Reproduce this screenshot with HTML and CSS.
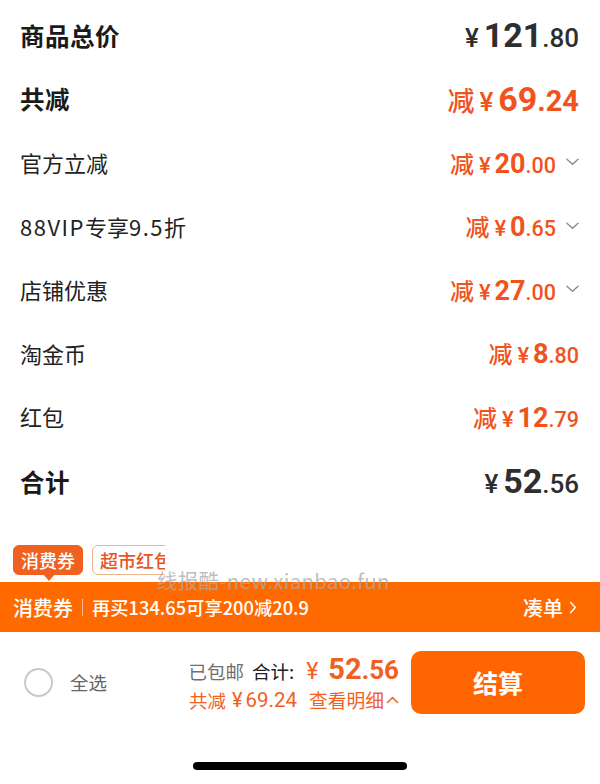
FILE: index.html
```html
<!DOCTYPE html>
<html lang="zh-CN">
<head>
<meta charset="utf-8">
<link rel="stylesheet" href="styles.css">
</head>
<body>
<div class="page">
  <div class="summary">
    <div class="row">
      <span class="label strong">商品总价</span>
      <span class="val dark big"><span class="cur">¥</span><span class="int">121</span><span class="dec">.80</span></span>
    </div>
    <div class="row">
      <span class="label strong">共减</span>
      <span class="val orange big"><span class="jian">减</span><span class="cur">¥</span><span class="int">69</span><span class="dec">.24</span></span>
    </div>
    <div class="row">
      <span class="label">官方立减</span>
      <span class="val orange"><span class="jian">减</span><span class="cur">¥</span><span class="int">20</span><span class="dec">.00</span><svg class="chev" viewBox="0 0 14 8"><path d="M1 1l6 5.5L13 1"/></svg></span>
    </div>
    <div class="row">
      <span class="label"><span class="lat">88VIP</span>专享<span class="lat">9.5</span>折</span>
      <span class="val orange"><span class="jian">减</span><span class="cur">¥</span><span class="int">0</span><span class="dec">.65</span><svg class="chev" viewBox="0 0 14 8"><path d="M1 1l6 5.5L13 1"/></svg></span>
    </div>
    <div class="row">
      <span class="label">店铺优惠</span>
      <span class="val orange"><span class="jian">减</span><span class="cur">¥</span><span class="int">27</span><span class="dec">.00</span><svg class="chev" viewBox="0 0 14 8"><path d="M1 1l6 5.5L13 1"/></svg></span>
    </div>
    <div class="row">
      <span class="label">淘金币</span>
      <span class="val orange"><span class="jian">减</span><span class="cur">¥</span><span class="int">8</span><span class="dec">.80</span></span>
    </div>
    <div class="row">
      <span class="label">红包</span>
      <span class="val orange"><span class="jian">减</span><span class="cur">¥</span><span class="int">12</span><span class="dec">.79</span></span>
    </div>
    <div class="row last">
      <span class="label strong">合计</span>
      <span class="val dark big"><span class="cur">¥</span><span class="int">52</span><span class="dec">.56</span></span>
    </div>
  </div>

  <div class="coupon-area">
    <div class="tags">
      <span class="tag active">消费券</span>
      <span class="tag outline">超市红包</span>
    </div>
    <div class="watermark">线报酷-new.xianbao.fun</div>
  </div>

  <div class="banner">
    <span class="b-title">消费券</span>
    <span class="b-sep"></span>
    <span class="b-text">再买134.65可享200减20.9</span>
    <span class="b-more">凑单<svg class="b-arrow" viewBox="0 0 8 14"><path d="M1.5 1.5l5 5.5-5 5.5"/></svg></span>
  </div>

  <div class="bottom">
    <div class="select">
      <span class="radio"></span>
      <span class="sel-text">全选</span>
    </div>
    <div class="total">
      <div class="t-line1">
        <span class="t-free">已包邮</span>
        <span class="t-label">合计:</span>
        <span class="t-cur">¥</span>
        <span class="t-int">52</span><span class="t-dec">.56</span>
      </div>
      <div class="t-line2"><span>共减</span><span class="t-yen">¥</span><span class="t-num">69.24</span><span class="t-link">查看明细</span><svg class="up" viewBox="0 0 12 8"><path d="M1 6.5L6 1.5l5 5"/></svg></div>
    </div>
    <button class="pay">结算</button>
  </div>

  <div class="home"><span class="home-bar"></span></div>
</div>
</body>
</html>
```

FILE: styles.css
```css
* { box-sizing: border-box; margin: 0; padding: 0; }
html, body { background: #fff; }
body {
  width: 600px;
  height: 784px;
  overflow: hidden;
  font-family: "Noto Sans CJK SC", "Noto Sans", sans-serif;
  color: #222;
}
.page { width: 600px; height: 784px; display: flex; flex-direction: column; }

.summary { padding: 3.5px 21px 0 20px; }
.row {
  height: 63.5px;
  display: flex;
  align-items: center;
  justify-content: space-between;
}
.row.last { margin-top: 1.5px; }
.label { font-size: 22px; color: #222; font-weight: 400; }
.label .lat { letter-spacing: 1.5px; }
.label.strong { font-size: 24.5px; font-weight: 600; color: #1a1a1a; letter-spacing: 0.5px; }

.val {
  display: flex;
  align-items: baseline;
  font-family: "Roboto", "Noto Sans CJK SC", sans-serif;
  font-weight: 700;
}
.val.dark { color: #2e2e2e; }
.val.orange { color: #f0531c; }
.val .jian { font-family: "Noto Sans CJK SC", sans-serif; font-size: 24px; font-weight: 500; margin-right: 5px; }
.val .cur { font-size: 22px; font-weight: 500; margin-right: 4px; }
.val .int { font-size: 27px; }
.val .dec { font-size: 21.5px; font-weight: 500; }
.val.big .jian { font-size: 27px; margin-right: 5px; }
.val.big .cur { font-size: 26px; margin-right: 5px; }
.val.big .int { font-size: 34px; }
.val.big .dec { font-size: 26px; }
.val.orange.big .dec { font-size: 29px; font-weight: 700; }
.chev {
  width: 13px; height: 8px;
  margin-left: 10px;
  align-self: center;
  fill: none;
  stroke: #8a8a8a;
  stroke-width: 1.5;
  stroke-linecap: round;
  stroke-linejoin: round;
}

.coupon-area { position: relative; margin-top: 32px; height: 37px; }
.tags {
  display: flex;
  gap: 9px;
  padding-left: 13px;
  width: 165px;
  overflow: hidden;
  height: 37px;
}
.tag {
  flex: none;
  height: 30px;
  padding: 0 7px;
  border-radius: 6px;
  font-size: 18px;
  line-height: 28px;
  font-weight: 500;
  position: relative;
}
.tag.active { background: #f0601f; color: #fff; border: 1px solid #f0601f; }
.tag.active::after {
  content: "";
  position: absolute;
  left: 29px;
  bottom: -7px;
  border-left: 6px solid transparent;
  border-right: 6px solid transparent;
  border-top: 7px solid #f0601f;
}
.tag.outline { background: #fff; color: #e8561e; border: 1px solid #efb38e; }
.watermark {
  position: absolute;
  left: 157px;
  top: 22px;
  font-family: "Noto Sans CJK SC", sans-serif;
  font-size: 20.5px;
  line-height: 26px;
  color: rgba(170, 170, 170, 0.75);
  z-index: 2;
  letter-spacing: 0.3px;
}

.banner {
  height: 50px;
  background: #ff6a00;
  display: flex;
  align-items: center;
  padding: 0 23px 0 13px;
  color: #fff;
  font-weight: 500;
}
.b-title { font-size: 20px; }
.b-sep { width: 1px; height: 17px; background: rgba(255,255,255,0.55); margin: 0 9px 0 9px; }
.b-text { flex: 1; font-size: 18.3px; }
.b-more { display: flex; align-items: center; font-size: 20px; }
.b-arrow { width: 8px; height: 13px; margin-left: 6px; fill: none; stroke: #fff; stroke-width: 1.6; stroke-linecap: round; stroke-linejoin: round; }

.bottom {
  height: 104px;
  display: flex;
  align-items: center;
  padding: 0 15px 4px 24px;
}
.select { display: flex; align-items: center; flex: 1; }
.radio {
  width: 29px; height: 29px;
  border-radius: 50%;
  border: 2px solid #c9c9c9;
  margin-right: 17px;
}
.sel-text { font-size: 18.5px; color: #666; }
.total { display: flex; flex-direction: column; align-items: flex-end; margin-right: 12px; margin-top: 2px; }
.t-line1 { display: flex; align-items: baseline; line-height: 30px; }
.t-free { font-size: 18.5px; color: #6f6f6f; margin-right: 8px; }
.t-label { font-size: 18.5px; color: #222; margin-right: 12px; }
.t-cur { font-size: 23px; color: #f0601f; font-family: "Roboto", sans-serif; margin-right: 10px; }
.t-int { font-size: 29px; color: #f0601f; font-family: "Roboto", sans-serif; font-weight: 700; }
.t-dec { font-size: 26px; color: #f0601f; font-family: "Roboto", sans-serif; font-weight: 700; }
.t-line2 { font-size: 18.5px; color: #f0601f; display: flex; align-items: center; line-height: 26px; }
.t-yen { margin: 0 3px 0 6px; font-family: "Roboto", sans-serif; font-size: 20px; }
.t-num { font-family: "Roboto", sans-serif; font-size: 20.5px; }
.t-link { margin-left: 12px; font-size: 18.75px; }
.up { width: 13px; height: 8px; margin-left: 2px; fill: none; stroke: #f0601f; stroke-width: 1.5; stroke-linecap: round; stroke-linejoin: round; }
.pay {
  width: 174px;
  height: 63px;
  border: none;
  border-radius: 10px;
  background: #ff6500;
  color: #fff;
  font-family: "Noto Sans CJK SC", sans-serif;
  font-size: 25px;
  font-weight: 700;
}
.home { flex: 1; display: flex; justify-content: center; align-items: flex-start; padding-top: 26px; }
.home-bar { width: 214px; height: 8px; border-radius: 4px; background: #000; }
```
